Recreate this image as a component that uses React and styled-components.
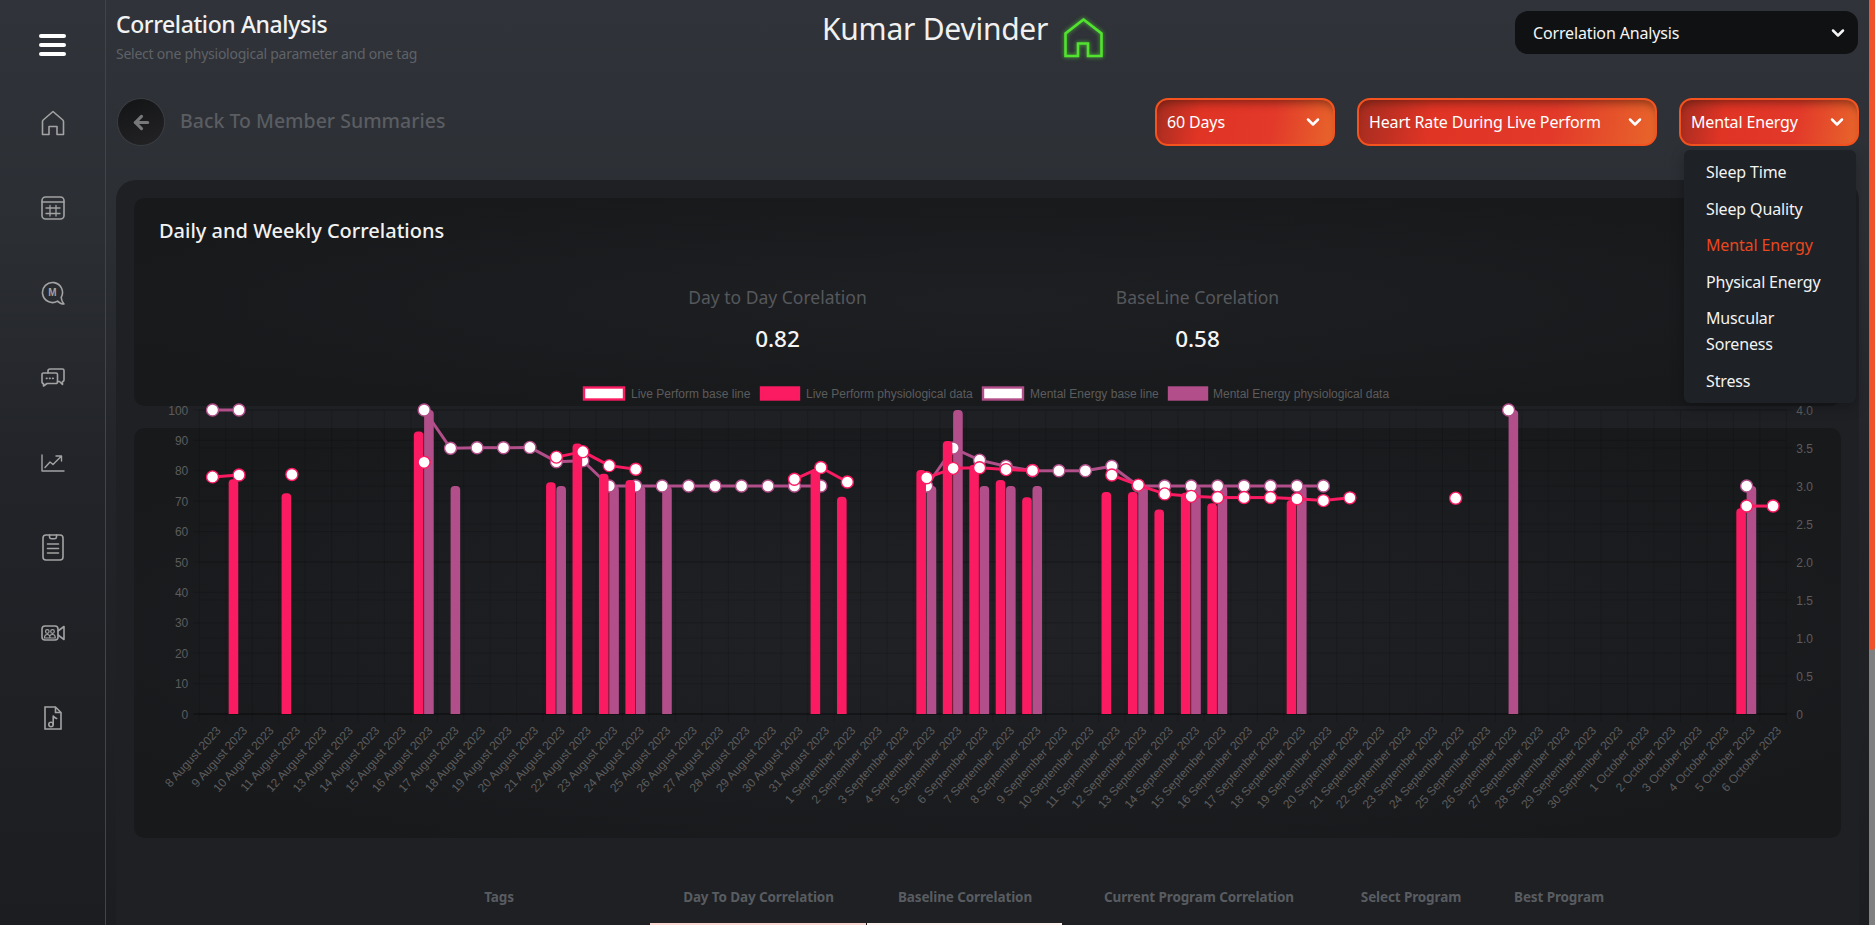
import React from 'react';
import styled, { createGlobalStyle } from 'styled-components';
import { ChevronDown, ArrowLeft } from 'lucide-react';

const UI_FONT = `"Noto Sans", "Open Sans", sans-serif`;
const CHART_FONT = `"Liberation Sans", Arial, sans-serif`;

const GlobalStyle = createGlobalStyle`
    html, body {
        margin: 0;
        padding: 0;
        height: 925px;
        overflow: hidden;
        background: #1b1d20;
    }
    * {
        box-sizing: border-box;
    }
`;

const Page = styled.div`
    display: flex;
    width: 1875px;
    height: 925px;
    overflow: hidden;
    font-family: ${UI_FONT};
    background: linear-gradient(180deg, #303339 0%, #2b2e33 25%, #222429 50%, #1b1d20 100%);
`;

const Sidebar = styled.nav`
    flex: 0 0 106px;
    display: flex;
    flex-direction: column;
    align-items: center;
    padding-top: 34px;
    border-right: 1px solid #41444a;
`;

const Burger = styled.div`
    display: flex;
    flex-direction: column;
    gap: 5px;
    width: 27px;
    margin-bottom: 24px;
`;

const BurgerBar = styled.span`
    display: block;
    height: 4px;
    border-radius: 2px;
    background: #ffffff;
`;

const NavItem = styled.div`
    flex: 0 0 85px;
    display: flex;
    align-items: center;
    justify-content: center;
    color: #a3a3a3;
`;

const Main = styled.main`
    flex: 1;
    min-width: 0;
    display: flex;
    flex-direction: column;
    padding: 0 10px;
`;

const Scrollbar = styled.div`
    flex: 0 0 6px;
    height: 100%;
    background: #808080;
`;

const ScrollThumb = styled.div`
    height: 650px;
    background: #f0522a;
    border-radius: 0 0 3px 3px;
`;

const Header = styled.header`
    flex: 0 0 98px;
    display: flex;
    align-items: flex-start;
`;

const TitleBlock = styled.div`
    flex: 0 0 706px;
    padding-top: 9px;
`;

const PageTitle = styled.h1`
    margin: 0;
    font-size: 23px;
    line-height: 30px;
    font-weight: 500;
    letter-spacing: -0.4px;
    color: #f2f2f2;
`;

const Subtitle = styled.p`
    margin: 4px 0 0;
    font-size: 14px;
    line-height: 22px;
    letter-spacing: -0.25px;
    color: #5f6267;
`;

const Member = styled.div`
    display: flex;
    align-items: flex-start;
    gap: 16px;
    padding-top: 18px;
`;

const MemberName = styled.span`
    margin-top: -9px;
    font-size: 30px;
    line-height: 40px;
    letter-spacing: -0.25px;
    color: #f0f0f0;
`;

const PageSelect = styled.div`
    width: 343px;
    height: 43px;
    margin: 11px 1px 0 auto;
    padding: 0 10px 0 18px;
    display: flex;
    align-items: center;
    justify-content: space-between;
    border-radius: 13px;
    background: #101113;
    color: #f5f5f5;
    font-size: 16px;
    letter-spacing: -0.15px;
`;

const Toolbar = styled.div`
    flex: 0 0 48px;
    display: flex;
    align-items: center;
    margin-bottom: 34px;
`;

const BackCircle = styled.div`
    width: 46px;
    height: 46px;
    margin: 0 16px 0 2px;
    display: flex;
    align-items: center;
    justify-content: center;
    border-radius: 50%;
    background: linear-gradient(160deg, #131415, #232325);
    box-shadow: 0 0 0 1px #3a3d42;
    color: #77787a;
`;

const BackLabel = styled.span`
    margin-top: -4px;
    font-size: 19.5px;
    font-weight: 500;
    color: #5a5d62;
`;

const Filters = styled.div`
    margin-left: auto;
    display: flex;
    gap: 22px;
`;

const FilterWrap = styled.div`
    position: relative;
`;

const FilterButton = styled.div`
    width: ${p => p.$width}px;
    height: 48px;
    padding: 0 10px 0 10px;
    display: flex;
    align-items: center;
    justify-content: space-between;
    border: 2px solid #f4521f;
    border-radius: 13px;
    background: linear-gradient(100deg, #a52d20 0%, #e03425 25%, #e2392a 65%, #e8652b 100%);
    box-shadow: inset 0 8px 9px -5px rgba(60, 20, 10, 0.55);
    color: #ffffff;
    font-size: 16px;
    letter-spacing: -0.15px;
    white-space: nowrap;
`;

const Menu = styled.ul`
    position: absolute;
    top: 52px;
    right: 3px;
    z-index: 5;
    width: 172px;
    height: 253px;
    margin: 0;
    padding: 4px 0 0;
    list-style: none;
    border-radius: 6px;
    background: #1e2125;
    box-shadow: 0 4px 14px rgba(0, 0, 0, 0.25);
`;

const MenuItem = styled.li`
    padding: 5.25px 30px 5.25px 22px;
    font-size: 16px;
    line-height: 26px;
    letter-spacing: -0.15px;
    color: ${p => (p.$active ? '#e9471f' : '#f3f3f3')};
`;

const Panel = styled.section`
    flex: 1;
    padding: 18px 18px 0;
    border-radius: 20px 20px 0 0;
    background: #1e2024;
`;

const StatsCard = styled.div`
    height: 208px;
    padding: 20px 25px 0;
    border-radius: 10px;
    background: radial-gradient(ellipse at center, #1e1f22 0%, #18191b 80%);
`;

const CardTitle = styled.h2`
    margin: 0;
    font-size: 20px;
    line-height: 26px;
    font-weight: 500;
    color: #f2f2f2;
`;

const StatsRow = styled.div`
    display: flex;
    justify-content: center;
    margin-top: 41px;
`;

const Stat = styled.div`
    width: 420px;
    text-align: center;
`;

const StatLabel = styled.div`
    font-size: 17.5px;
    line-height: 24px;
    color: #55585c;
`;

const StatValue = styled.div`
    margin-top: 15px;
    font-size: 22.5px;
    line-height: 30px;
    font-weight: 500;
    color: #f5f5f5;
`;

const ChartCard = styled.div`
    display: flow-root;
    height: 410px;
    margin-top: 22px;
    border-radius: 10px;
    background: radial-gradient(ellipse at center, #212226 0%, #18191b 85%);
`;

const ChartSvg = styled.svg`
    display: block;
    margin-top: -43px;
`;

const ChartLabel = styled.text`
    font-family: ${CHART_FONT};
    font-size: 12px;
    fill: #5c5c5c;
`;

const TableHead = styled.div`
    display: grid;
    grid-template-columns: 302px 217px 196px 272px 152px 144px;
    margin: 47px 0 0 214px;
`;

const HeadCell = styled.div`
    text-align: center;
    font-size: 13.5px;
    line-height: 24px;
    font-weight: 700;
    letter-spacing: -0.12px;
    color: #595c60;
`;

const TagCell = styled.div`
    grid-column: ${p => p.$col};
    height: 4px;
    margin-top: 14px;
    margin-right: ${p => p.$gap}px;
    background: ${p => p.$color};
`;

const PINK = '#fb1b62';
const MAUVE = '#b24f8a';

const MONTHS = [['August', 8, 31], ['September', 1, 30], ['October', 1, 6]];
const DATES = MONTHS.flatMap(([name, from, to]) =>
    Array.from({ length: to - from + 1 }, (_, k) => `${from + k} ${name} 2023`)
);

const LIVE_BARS = {
    1: 77.2, 3: 72.6, 8: 92.9, 13: 76.2, 14: 89, 15: 79, 16: 77, 23: 80.5, 24: 71.5,
    27: 80.3, 28: 89.8, 29: 82, 30: 77, 31: 71.3, 34: 73, 35: 73, 36: 67.3, 37: 72.8,
    38: 69.3, 41: 70.4, 58: 67.7,
};
const MENTAL_BARS = {
    8: 100, 9: 75, 13: 75, 15: 75, 16: 75, 17: 75, 27: 75, 28: 100, 29: 75, 30: 75,
    31: 75, 35: 75, 37: 75, 38: 75, 41: 75, 49: 100, 58: 75,
};
const LIVE_LINE = {
    0: 78, 1: 78.6, 3: 78.8, 8: 82.8, 13: 84.5, 14: 86.3, 15: 81.7, 16: 80.5, 22: 77.2,
    23: 81.1, 24: 76.3, 27: 77.7, 28: 80.8, 29: 81, 30: 80.4, 31: 80.1, 34: 78.6, 35: 75.3,
    36: 72.4, 37: 71.6, 38: 71.2, 39: 71.2, 40: 71.2, 41: 70.8, 42: 70.2, 43: 71.1,
    47: 71, 58: 68.4, 59: 68.4,
};
const MENTAL_LINE = {
    0: 100, 1: 100, 8: 100, 9: 87.4, 10: 87.6, 11: 87.6, 12: 87.7, 13: 83, 14: 83.3, 15: 75,
    16: 75, 17: 75, 18: 75, 19: 75, 20: 75, 21: 75, 22: 75, 23: 75, 27: 75, 28: 87.5, 29: 83.5,
    30: 81.5, 31: 80, 32: 80, 33: 80, 34: 81.5, 35: 75, 36: 75, 37: 75, 38: 75, 39: 75, 40: 75,
    41: 75, 42: 75, 49: 100, 58: 75,
};

// plot area, in svg coordinates
const LEFT = 65.3;
const STEP = 26.45;
const RIGHT = LEFT + STEP * 60;
const TOP = 25;
const ZERO = 329;

const xAt = i => LEFT + STEP * (i + 0.5);
const yAt = v => ZERO - (v * (ZERO - TOP)) / 100;

function Bars({ data, color, from }) {
    return Object.entries(data).map(([i, v]) => {
        const x = xAt(Number(i)) + from;
        const y = yAt(v);
        const w = 9.6;
        const d = `M${x} ${ZERO}V${y + 4}Q${x} ${y} ${x + 4} ${y}H${x + w - 4}Q${x + w} ${y} ${x + w} ${y + 4}V${ZERO}Z`;
        return <path key={i} d={d} fill={color} />;
    });
}

function Line({ data, color }) {
    const keys = Object.keys(data).map(Number);
    const segments = keys.filter(i => data[i + 1] !== undefined);
    return (
        <g>
            {segments.map(i => (
                <line
                    key={i}
                    x1={xAt(i)}
                    y1={yAt(data[i])}
                    x2={xAt(i + 1)}
                    y2={yAt(data[i + 1])}
                    stroke={color}
                    strokeWidth="3"
                />
            ))}
            {keys.map(i => (
                <circle key={i} cx={xAt(i)} cy={yAt(data[i])} r="6" fill="#ffffff" stroke={color} strokeWidth="1.4" />
            ))}
        </g>
    );
}

function Legend() {
    const items = [
        { x: 449, w: 42, text: 'Live Perform base line', tx: 497, color: PINK, outline: true },
        { x: 626, w: 40, text: 'Live Perform physiological data', tx: 672, color: PINK },
        { x: 848, w: 42, text: 'Mental Energy base line', tx: 896, color: MAUVE, outline: true },
        { x: 1034, w: 40, text: 'Mental Energy physiological data', tx: 1079, color: MAUVE },
    ];
    return items.map(item => (
        <g key={item.text}>
            <rect
                x={item.x + 1}
                y="2.5"
                width={item.w - 2}
                height="12"
                fill={item.outline ? '#ffffff' : item.color}
                stroke={item.color}
                strokeWidth="2.4"
            />
            <ChartLabel x={item.tx} y="13">{item.text}</ChartLabel>
        </g>
    ));
}

function Chart() {
    const leftTicks = Array.from({ length: 11 }, (_, k) => k * 10);
    const rightTicks = Array.from({ length: 9 }, (_, k) => k * 0.5);
    return (
        <ChartSvg width="1707" height="453" viewBox="0 0 1707 453">
            <Legend />
            {Array.from({ length: 61 }, (_, k) => (
                <line key={k} x1={LEFT + STEP * k} y1={TOP} x2={LEFT + STEP * k} y2={ZERO + 8} stroke="rgba(0,0,0,0.13)" />
            ))}
            {leftTicks.map(t => (
                <line key={t} x1={LEFT - 6} y1={yAt(t)} x2={RIGHT} y2={yAt(t)} stroke={t === 0 ? 'rgba(0,0,0,0.5)' : 'rgba(0,0,0,0.14)'} />
            ))}
            {rightTicks.map(t => (
                <line key={t} x1={LEFT} y1={yAt(t * 25)} x2={RIGHT + 6} y2={yAt(t * 25)} stroke="rgba(0,0,0,0.1)" />
            ))}
            {leftTicks.map(t => (
                <ChartLabel key={t} x={LEFT - 11} y={yAt(t) + 4.5} textAnchor="end">{t}</ChartLabel>
            ))}
            {rightTicks.map(t => (
                <ChartLabel key={t} x={RIGHT + 10} y={yAt(t * 25) + 4.5}>{t.toFixed(t === 0 ? 0 : 1)}</ChartLabel>
            ))}
            <Bars data={MENTAL_BARS} color={MAUVE} from={0} />
            <Line data={MENTAL_LINE} color={MAUVE} />
            <Bars data={LIVE_BARS} color={PINK} from={-10.3} />
            <Line data={LIVE_LINE} color={PINK} />
            {DATES.map((d, i) => (
                <ChartLabel
                    key={d}
                    textAnchor="end"
                    transform={`translate(${xAt(i) + 9} ${ZERO + 17}) rotate(-48)`}
                >
                    {d}
                </ChartLabel>
            ))}
        </ChartSvg>
    );
}

const stroke = {
    fill: 'none',
    stroke: 'currentColor',
    strokeWidth: 1.6,
    strokeLinecap: 'round',
    strokeLinejoin: 'round',
};

const NAV_ICONS = [
    <svg key="home" width="24" height="26" viewBox="0 0 24 26" {...stroke}>
        <path d="M1.5 24.5V11.5a2 2 0 0 1 .7-1.5L12 1.5 21.8 10a2 2 0 0 1 .7 1.5v13h-6.5v-8H8v8z" />
    </svg>,
    <svg key="calendar" width="24" height="24" viewBox="0 0 24 24" {...stroke}>
        <rect x="1" y="1" width="22" height="22" rx="3.5" />
        <path d="M1 6h22M5 12h14M5 17.5h14M9 9.5v10.5M15 9.5v10.5" strokeWidth="1.3" />
    </svg>,
    <svg key="mentor" width="24" height="24" viewBox="0 0 24 24" {...stroke}>
        <path d="M20.16 16.5A10 10 0 1 0 16.5 20.16C18 21.8 20.5 23 23 23C21.3 21.300 20.5 19 20.16 16.5Z" />
        <text x="11.500" y="15.200" textAnchor="middle" fontFamily={CHART_FONT} fontWeight="700" fontSize="10" fill="currentColor" stroke="none">M</text>
    </svg>,
    <svg key="chat" width="24" height="19" viewBox="0 0 24 19" {...stroke}>
        <path d="M7 5V3a2 2 0 0 1 2-2h12.500a1.500 1.500 0 0 1 1.500 1.500V12a1.500 1.500 0 0 1-1.500 1.500v3l-3-3h-2" />
        <path d="M2.500 5H15a1.500 1.500 0 0 1 1.500 1.500v7.500a1.500 1.500 0 0 1-1.500 1.500H6L2.500 18v-2.500A1.500 1.500 0 0 1 1 14V6.500A1.500 1.500 0 0 1 2.500 5z" />
        <path d="M5.500 10.300h.4M8.600 10.300h.4M11.700 10.300h.4" strokeWidth="1.800" />
    </svg>,
    <svg key="trend" width="24" height="18" viewBox="0 0 24 18" {...stroke}>
        <path d="M1 1v16h22" strokeWidth="1.400" />
        <path d="M4 13.500l5-5.500 3 2.500 8-8M15 2h5.500v5" strokeWidth="1.400" />
    </svg>,
    <svg key="clipboard" width="22" height="27" viewBox="0 0 22 27" {...stroke}>
        <rect x="1" y="1" width="20" height="25" rx="3" />
        <path d="M7.500 1v2a2 2 0 0 0 2 1.800h3a2 2 0 0 0 2-1.800V1M5.500 10h11M5.500 14.500h11M5.500 19h11" />
    </svg>,
    <svg key="video" width="24" height="16" viewBox="0 0 24 16" {...stroke}>
        <rect x="1" y="1" width="16" height="14" rx="3" />
        <path d="M17 6l6-4.500v13L17 10" />
        <circle cx="6.300" cy="6.500" r="1.800" strokeWidth="1.200" />
        <circle cx="11.500" cy="6.500" r="1.800" strokeWidth="1.200" />
        <path d="M3.500 13c0-2.500 1-3.500 2.800-3.500S9 10.500 9 13zM9 10.500c.6-.7 1.400-1 2.500-1 1.800 0 2.800 1 2.800 3.500H9" strokeWidth="1.200" />
    </svg>,
    <svg key="music" width="18" height="24" viewBox="0 0 18 24" {...stroke}>
        <path d="M1 1h10.500L17 6.500V23H1zM11.500 1v5.500H17" strokeLinejoin="miter" />
        <circle cx="7" cy="18.500" r="2.200" strokeWidth="1.600" />
        <path d="M9.200 18.500V10c1 1.800 2.500 2 3.500 2.500" strokeWidth="1.600" />
    </svg>,
];

const HomeMark = styled.svg`
    filter: drop-shadow(0 0 2px rgba(90, 240, 60, 0.7));
`;

const METRICS = ['Sleep Time', 'Sleep Quality', 'Mental Energy', 'Physical Energy', 'Muscular Soreness', 'Stress'];
const COLUMNS = ['Tags', 'Day To Day Correlation', 'Baseline Correlation', 'Current Program Correlation', 'Select Program', 'Best Program'];

export default function App() {
    return (
        <Page>
            <GlobalStyle />
            <Sidebar>
                <Burger>
                    <BurgerBar />
                    <BurgerBar />
                    <BurgerBar />
                </Burger>
                {NAV_ICONS.map(icon => (
                    <NavItem key={icon.key}>{icon}</NavItem>
                ))}
            </Sidebar>
            <Main>
                <Header>
                    <TitleBlock>
                        <PageTitle>Correlation Analysis</PageTitle>
                        <Subtitle>Select one physiological parameter and one tag</Subtitle>
                    </TitleBlock>
                    <Member>
                        <MemberName>Kumar Devinder</MemberName>
                        <HomeMark width="40" height="40" viewBox="0 0 40 40" fill="none" stroke="#52e32f" strokeWidth="2.600">
                            <path d="M1.500 38V15.500L19.500 1.500l18 14V38H24V25.500H14V38z" />
                        </HomeMark>
                    </Member>
                    <PageSelect>
                        Correlation Analysis
                        <ChevronDown size={20} strokeWidth={3} />
                    </PageSelect>
                </Header>
                <Toolbar>
                    <BackCircle>
                        <ArrowLeft size={21} strokeWidth={3.6} />
                    </BackCircle>
                    <BackLabel>Back To Member Summaries</BackLabel>
                    <Filters>
                        <FilterButton $width={180}>
                            60 Days
                            <ChevronDown size={20} strokeWidth={3} />
                        </FilterButton>
                        <FilterButton $width={300}>
                            Heart Rate During Live Perform
                            <ChevronDown size={20} strokeWidth={3} />
                        </FilterButton>
                        <FilterWrap>
                            <FilterButton $width={180}>
                                Mental Energy
                                <ChevronDown size={20} strokeWidth={3} />
                            </FilterButton>
                            <Menu>
                                {METRICS.map(m => (
                                    <MenuItem key={m} $active={m === 'Mental Energy'}>{m}</MenuItem>
                                ))}
                            </Menu>
                        </FilterWrap>
                    </Filters>
                </Toolbar>
                <Panel>
                    <StatsCard>
                        <CardTitle>Daily and Weekly Correlations</CardTitle>
                        <StatsRow>
                            <Stat>
                                <StatLabel>Day to Day Corelation</StatLabel>
                                <StatValue>0.82</StatValue>
                            </Stat>
                            <Stat>
                                <StatLabel>BaseLine Corelation</StatLabel>
                                <StatValue>0.58</StatValue>
                            </Stat>
                        </StatsRow>
                    </StatsCard>
                    <ChartCard>
                        <Chart />
                    </ChartCard>
                    <TableHead>
                        {COLUMNS.map(c => (
                            <HeadCell key={c}>{c}</HeadCell>
                        ))}
                        <TagCell $col={2} $gap={1} $color="#fdd9d3" />
                        <TagCell $col={3} $gap={1} $color="#fff4f0" />
                    </TableHead>
                </Panel>
            </Main>
            <Scrollbar>
                <ScrollThumb />
            </Scrollbar>
        </Page>
    );
}
